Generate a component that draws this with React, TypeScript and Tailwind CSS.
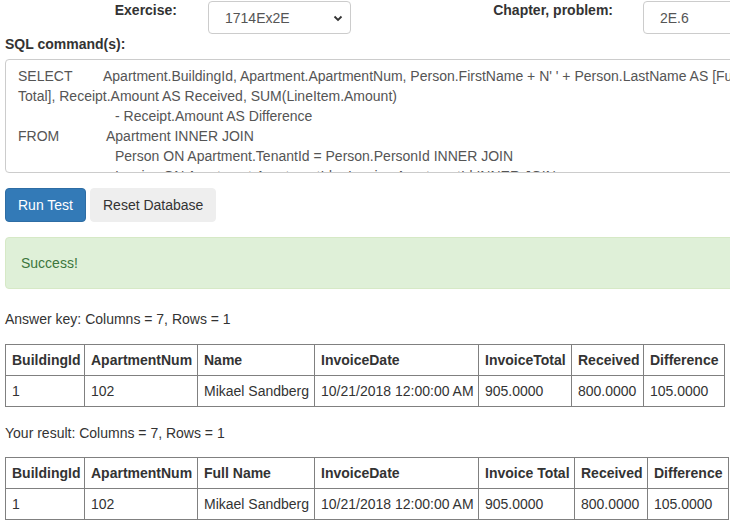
import React from 'react';

type Table = {
  widths: number[];
  headers: string[];
  row: string[];
};

const answerKey: Table = {
  widths: [79, 113, 117, 164, 93, 72, 81],
  headers: ['BuildingId', 'ApartmentNum', 'Name', 'InvoiceDate', 'InvoiceTotal', 'Received', 'Difference'],
  row: ['1', '102', 'Mikael Sandberg', '10/21/2018 12:00:00 AM', '905.0000', '800.0000', '105.0000'],
};

const yourResult: Table = {
  widths: [79, 113, 117, 164, 96, 73, 81],
  headers: ['BuildingId', 'ApartmentNum', 'Full Name', 'InvoiceDate', 'Invoice Total', 'Received', 'Difference'],
  row: ['1', '102', 'Mikael Sandberg', '10/21/2018 12:00:00 AM', '905.0000', '800.0000', '105.0000'],
};

const ResultTable: React.FC<{ data: Table }> = ({ data }) => {
  const total = data.widths.reduce((a, b) => a + b, 0) + 1;
  return (
    <table className="table-fixed border-collapse" style={{ width: total }}>
      <colgroup>
        {data.widths.map((w, i) => (
          <col key={i} style={{ width: w }} />
        ))}
      </colgroup>
      <thead>
        <tr>
          {data.headers.map((h) => (
            <th key={h} className="border border-[#808080] px-[6px] py-[5px] text-left font-bold leading-5 whitespace-nowrap">
              {h}
            </th>
          ))}
        </tr>
      </thead>
      <tbody>
        <tr>
          {data.row.map((c, i) => (
            <td key={i} className="border border-[#808080] px-[6px] py-[5px] leading-5 whitespace-nowrap">
              {c}
            </td>
          ))}
        </tr>
      </tbody>
    </table>
  );
};

export default function App() {
  return (
    <div
      className="w-[730px] h-[532px] overflow-hidden bg-white text-[14px] leading-5 text-[#333]"
      style={{ fontFamily: '"Liberation Sans", Arial, sans-serif' }}
    >
      <div className="w-[1100px]">
        {/* top selectors */}
        <div className="flex h-[34px] items-start">
          <div className="w-[177px] text-right font-bold">Exercise:</div>
          <div className="ml-[31px] mt-[1px] flex h-[33px] w-[143px] items-center justify-between rounded border border-[#ccc] pl-4 pr-[7px] text-[#555]">
            <span>1714Ex2E</span>
            <svg width="10" height="8" viewBox="0 0 10 8" className="text-[#333]">
              <path d="M1.5 2.5 L5 6 L8.5 2.5" fill="none" stroke="currentColor" strokeWidth="1.8" />
            </svg>
          </div>
          <div className="w-[262px] text-right font-bold">Chapter, problem:</div>
          <div className="ml-[30px] mt-[1px] flex h-[33px] w-[200px] items-center rounded border border-[#ccc] pl-4 text-[#555]">
            2E.6
          </div>
        </div>

        <div className="px-[5px]">
          <div className="mb-[5px] font-bold">SQL command(s):</div>
          <div className="h-[114px] w-[1000px] overflow-hidden rounded border border-[#ccc] px-3 py-[6px] text-[#555] whitespace-pre">
            <div className="flex">
              <span className="w-[85px]">SELECT</span>
              <span>Apartment.BuildingId, Apartment.ApartmentNum, Person.FirstName + N' ' + Person.LastName AS [Full Name], Invoice.InvoiceDate</span>
            </div>
            <div>Total], Receipt.Amount AS Received, SUM(LineItem.Amount)</div>
            <div className="pl-[97px]">- Receipt.Amount AS Difference</div>
            <div className="flex">
              <span className="w-[88px]">FROM</span>
              <span>Apartment INNER JOIN</span>
            </div>
            <div className="pl-[97px]">Person ON Apartment.TenantId = Person.PersonId INNER JOIN</div>
            <div className="pl-[97px]">Invoice ON Apartment.ApartmentId = Invoice.ApartmentId INNER JOIN</div>
          </div>

          <div className="mt-[15px] flex gap-1">
            <button type="button" className="h-[34px] rounded border border-[#2e6da4] bg-[#337ab7] px-3 text-white">
              Run Test
            </button>
            <button type="button" className="h-[34px] rounded border border-[#eee] bg-[#eee] px-3 text-[#333]">
              Reset Database
            </button>
          </div>

          <div className="mt-[15px] w-[1000px] rounded border border-[#d6e9c6] bg-[#dff0d8] p-[15px] text-[#3c763d]">
            Success!
          </div>

          <div className="mt-5">Answer key: Columns = 7, Rows = 1</div>
          <div className="mt-[15px]">
            <ResultTable data={answerKey} />
          </div>

          <div className="mt-4">Your result: Columns = 7, Rows = 1</div>
          <div className="mt-[14px]">
            <ResultTable data={yourResult} />
          </div>
        </div>
      </div>
    </div>
  );
}
